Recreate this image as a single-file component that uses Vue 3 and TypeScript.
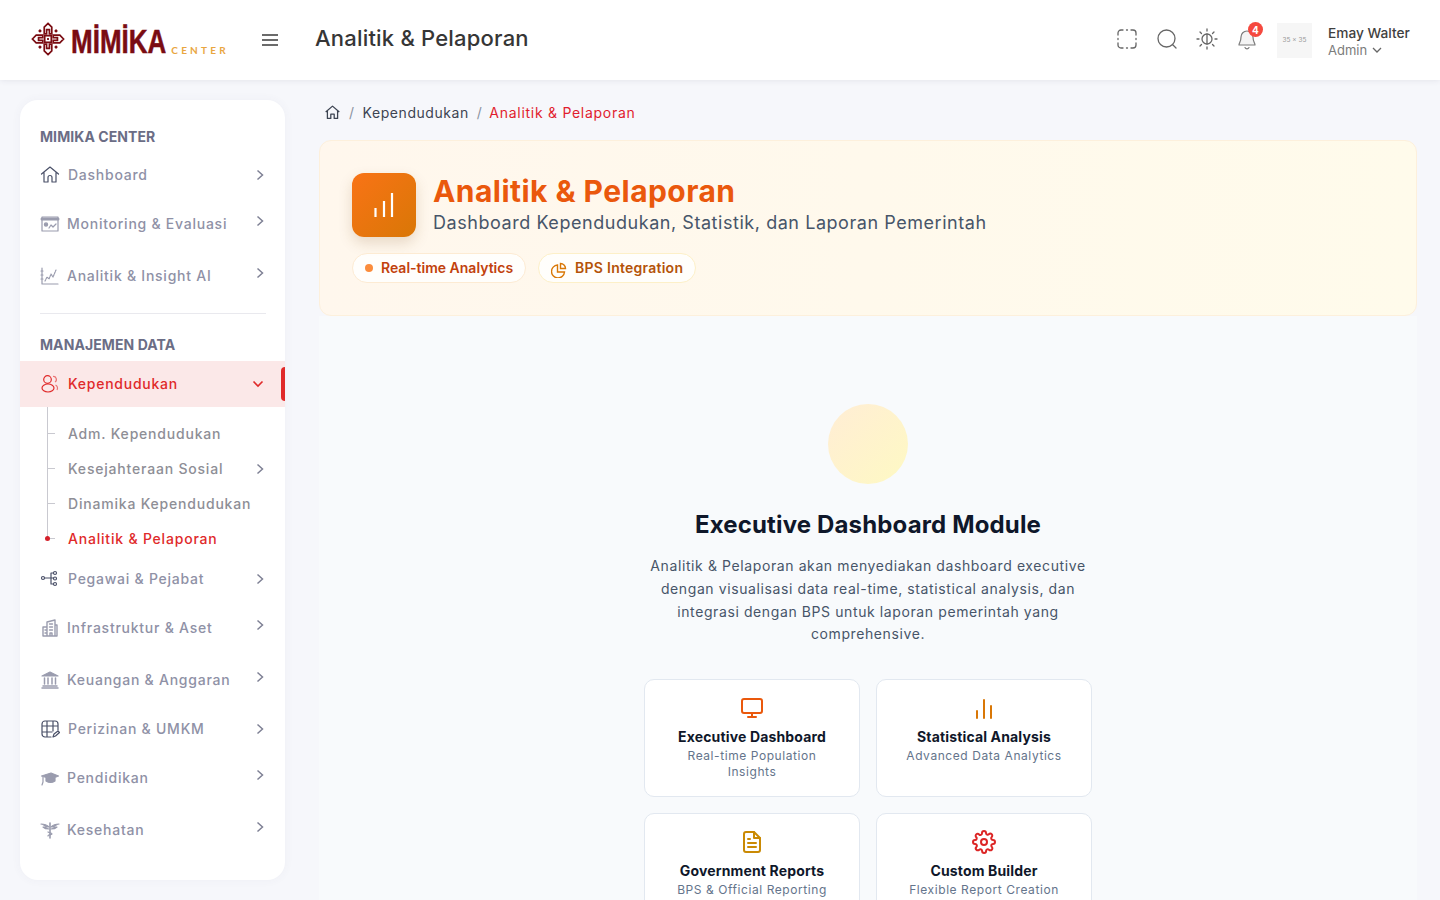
<template>
  <div class="page">
    <header class="topbar">
      <div class="logo">
        <svg class="logo-mark" width="34" height="34" viewBox="0 0 36 36" fill="none" stroke="#7a0c12" stroke-width="1.800">
          <path d="M18 1.500l4 4v7h-2.500V8h-3v4.500H14v-7z" />
          <path d="M18 34.500l4-4v-7h-2.500V28h-3v-4.500H14v7z" />
          <path d="M1.500 18l4-4h7v2.500H8v3h4.500V22h-7z" />
          <path d="M34.500 18l-4-4h-7v2.500H28v3h-4.500V22h7z" />
          <rect x="14.500" y="14.500" width="7" height="7" />
          <g fill="#7a0c12" stroke="none">
            <rect x="17" y="17" width="2" height="2" />
            <path d="M9.500 7.500l2 2-2 2-2-2zM26.500 7.500l2 2-2 2-2-2zM9.500 24.500l2 2-2 2-2-2zM26.500 24.500l2 2-2 2-2-2z" />
          </g>
        </svg>
        <span class="logo-word">MİMİKA</span>
        <span class="logo-center">CENTER</span>
      </div>
      <svg class="burger" width="16" height="14" viewBox="0 0 16 14" stroke="#6b6b6b" stroke-width="2">
        <path d="M0 2h16M0 7h16M0 12h16" />
      </svg>
      <div class="page-title">Analitik &amp; Pelaporan</div>
      <div class="top-actions">
        <span class="top-icon">
          <svg width="22" height="22" viewBox="0 0 22 22" fill="none" stroke="#666" stroke-width="1.300" stroke-linecap="round">
            <path d="M2 7V5a3 3 0 0 1 3-3h2M15 2h2a3 3 0 0 1 3 3v2M20 15v2a3 3 0 0 1-3 3h-2M7 20H5a3 3 0 0 1-3-3v-2" />
            <path d="M2 10.500v1M20 10.500v1M10.500 2h1M10.500 20h1" />
          </svg>
        </span>
        <span class="top-icon">
          <svg width="22" height="22" viewBox="0 0 22 22" fill="none" stroke="#666" stroke-width="1.300" stroke-linecap="round">
            <circle cx="10.500" cy="10.500" r="8.500" />
            <path d="M17 17l3 3" />
          </svg>
        </span>
        <span class="top-icon">
          <svg width="22" height="22" viewBox="0 0 22 22" fill="none" stroke="#666" stroke-width="1.300" stroke-linecap="round">
            <circle cx="11" cy="11" r="5" />
            <path d="M11 6v10" />
            <path d="M11 1v2M11 19v2M1 11h2M19 11h2M4 4l1.500 1.500M16.500 16.500L18 18M4 18l1.500-1.500M16.500 5.500L18 4" />
          </svg>
        </span>
        <span class="top-icon bell">
          <svg width="22" height="22" viewBox="0 0 22 22" fill="none" stroke="#7a7a7a" stroke-width="1.200" stroke-linecap="round" stroke-linejoin="round">
            <path d="M11 3a6 6 0 0 0-6 6c0 5-2 6-2 8h16c0-2-2-3-2-8a6 6 0 0 0-6-6z" fill="#f4f4f4" />
            <path d="M9 19.500a2.200 2.200 0 0 0 4 0" />
          </svg>
          <span class="badge">4</span>
        </span>
      </div>
      <div class="avatar">35 × 35</div>
      <div class="user">
        <div class="user-name">Emay Walter</div>
        <div class="user-role">
          Admin
          <svg width="10" height="6" viewBox="0 0 10 6" fill="none" stroke="#666" stroke-width="1.300"><path d="M1 1l4 4 4-4" /></svg>
        </div>
      </div>
    </header>

    <div class="body">
      <aside class="sidebar">
        <div class="section-title">MIMIKA CENTER</div>
        <div v-for="m in topMenu" :key="m.label" class="row" :class="{ tall: m.tall }">
          <svg class="row-icon" width="20" height="20" viewBox="0 0 20 20" fill="none" :stroke="m.color" stroke-width="1.200" stroke-linecap="round" stroke-linejoin="round" v-html="m.icon"></svg>
          <span class="row-label">{{ m.label }}</span>
          <svg class="chev" width="8" height="12" viewBox="0 0 8 12" fill="none" stroke="#7e8094" stroke-width="1.500"><path d="M1.500 1.500L6.500 6l-5 4.500" /></svg>
        </div>
        <div class="divider"></div>
        <div class="section-title second">MANAJEMEN DATA</div>
        <div class="row active">
          <svg class="row-icon" width="20" height="20" viewBox="0 0 20 20" fill="none" stroke="#e02a2a" stroke-width="1.200">
            <circle cx="7.500" cy="5.500" r="3.800" />
            <ellipse cx="8" cy="14" rx="6" ry="4" />
            <path d="M13 2.500a3 3 0 0 1 2 5.500M15.500 11a3.500 3.500 0 0 1 1.500 5" opacity=".6" />
          </svg>
          <span class="row-label">Kependudukan</span>
          <svg class="chev-down" width="12" height="8" viewBox="0 0 12 8" fill="none" stroke="#e02a2a" stroke-width="1.600"><path d="M1.500 1.500L6 6l4.500-4.500" /></svg>
          <span class="active-bar"></span>
        </div>
        <ul class="submenu">
          <li v-for="s in subMenu" :key="s.label" :class="{ current: s.current }">
            <span>{{ s.label }}</span>
            <svg v-if="s.more" class="chev" width="8" height="12" viewBox="0 0 8 12" fill="none" stroke="#7e8094" stroke-width="1.500"><path d="M1.500 1.500L6.500 6l-5 4.500" /></svg>
          </li>
        </ul>
        <div v-for="m in bottomMenu" :key="m.label" class="row" :class="{ tall: m.tall }">
          <svg class="row-icon" width="20" height="20" viewBox="0 0 20 20" fill="none" :stroke="m.color" stroke-width="1.200" stroke-linecap="round" stroke-linejoin="round" v-html="m.icon"></svg>
          <span class="row-label">{{ m.label }}</span>
          <svg class="chev" width="8" height="12" viewBox="0 0 8 12" fill="none" stroke="#7e8094" stroke-width="1.500"><path d="M1.500 1.500L6.500 6l-5 4.500" /></svg>
        </div>
      </aside>

      <main class="content">
        <nav class="crumbs">
          <svg width="17" height="17" viewBox="0 0 20 20" fill="none" stroke="#3d4452" stroke-width="1.500" stroke-linejoin="round">
            <path d="M2 9.500L10 2.500l8 7M4 8v9h4v-5h4v5h4V8" />
          </svg>
          <span class="sep">/</span>
          <span>Kependudukan</span>
          <span class="sep">/</span>
          <span class="crumb-current">Analitik &amp; Pelaporan</span>
        </nav>

        <section class="hero">
          <div class="hero-top">
            <div class="hero-icon">
              <svg width="24" height="24" viewBox="0 0 24 24" fill="none" stroke="#fff" stroke-width="2.200">
                <path d="M3.500 24v-9M12 24V8M20 24V0" />
              </svg>
            </div>
            <div>
              <h1>Analitik &amp; Pelaporan</h1>
              <p>Dashboard Kependudukan, Statistik, dan Laporan Pemerintah</p>
            </div>
          </div>
          <div class="hero-tags">
            <span class="tag tag-orange"><i class="dot"></i>Real-time Analytics</span>
            <span class="tag tag-amber">
              <svg class="pie" width="16" height="16" viewBox="0 0 16 16" fill="none" stroke="#d97706" stroke-width="1.400">
                <path d="M6.500 3A6.500 6.500 0 1 0 13.500 10H6.500z" />
                <path d="M9.500 1.500a5 5 0 0 1 5 5h-5z" />
              </svg>
              BPS Integration
            </span>
          </div>
        </section>

        <section class="module">
          <div class="circle"></div>
          <h2>Executive Dashboard Module</h2>
          <p class="lead">Analitik &amp; Pelaporan akan menyediakan dashboard executive dengan visualisasi data real-time, statistical analysis, dan integrasi dengan BPS untuk laporan pemerintah yang comprehensive.</p>
          <div class="cards">
            <div v-for="c in cards" :key="c.title" class="card">
              <svg width="24" height="24" viewBox="0 0 24 24" fill="none" :stroke="c.color" stroke-width="2" stroke-linecap="round" stroke-linejoin="round" v-html="c.icon"></svg>
              <div class="card-title">{{ c.title }}</div>
              <div class="card-sub">{{ c.sub }}</div>
            </div>
          </div>
        </section>
      </main>
    </div>
  </div>
</template>

<script setup lang="ts">
interface MenuItem { label: string; icon: string; tall?: boolean; color: string }

const grey = '#9a9cae'
const dark = '#4a5068'

const topMenu: MenuItem[] = [
  { label: 'Dashboard', color: dark, icon: '<path d="M1.500 9L10 2l8.500 7M4 7.500V17h4v-4.500a2 2 0 0 1 4 0V17h4V7.500"/>' },
  { label: 'Monitoring & Evaluasi', color: grey, tall: true, icon: '<rect x="2" y="3" width="16" height="14"/><path d="M2 5h16" stroke-width="3"/><circle cx="6" cy="10.500" r="1.600" fill="#9a9cae"/><path d="M9 14l2-3 2 2 3-3"/>' },
  { label: 'Analitik & Insight AI', color: grey, tall: true, icon: '<path d="M2 2v16h16M1 5h2M1 9h2M1 13h2"/><path d="M5 15l2-4 2 2 2-5 2 3 3-7" stroke-dasharray="1.500 1"/>' },
]

const subMenu = [
  { label: 'Adm. Kependudukan' },
  { label: 'Kesejahteraan Sosial', more: true },
  { label: 'Dinamika Kependudukan' },
  { label: 'Analitik & Pelaporan', current: true },
]

const bottomMenu: MenuItem[] = [
  { label: 'Pegawai & Pejabat', color: dark, icon: '<circle cx="3" cy="9" r="1.500"/><circle cx="15" cy="4" r="1.500"/><circle cx="15" cy="9.500" r="1.500"/><circle cx="15" cy="15" r="1.500"/><path d="M4.500 9h9M11 4h2.500M11 15h2.500M11 4v11"/>' },
  { label: 'Infrastruktur & Aset', color: grey, tall: true, icon: '<path d="M7 18V4l8-2v16M7 9H3v9h14V7h-2M9.500 6h3M9.500 9h3M9.500 12h3M5 12h1M5 15h1M10 18v-3h2v3" stroke-width="1.400"/>' },
  { label: 'Keuangan & Anggaran', color: grey, tall: true, icon: '<path d="M10 2l8 4H2z" fill="#9a9cae"/><path d="M2 18h16M3 16h14M4.500 8v6M8 8v6M12 8v6M15.500 8v6" stroke-width="1.500"/>' },
  { label: 'Perizinan & UMKM', color: dark, icon: '<path d="M11 18H5a3 3 0 0 1-3-3V5a3 3 0 0 1 3-3h10a3 3 0 0 1 3 3v6M2 7h16M2 13h10M7 2v16M13 2v10"/><path d="M13 18l1-3 4-3 1.500 1.500-4 3.500z"/>' },
  { label: 'Pendidikan', color: grey, tall: true, icon: '<path d="M1.500 8L11 5l7.500 3-7.500 3z" fill="#9a9cae"/><path d="M6 10v3c3 2 6 2 9 0v-3" fill="#9a9cae"/><path d="M3 9v5l-1 3"/>' },
  { label: 'Kesehatan', color: grey, tall: true, icon: '<path d="M10 3v15" stroke-width="1.600"/><path d="M1 4c3 0 6 1 8 3H3c1 1 3 2 6 2M19 4c-3 0-6 1-8 3h6c-1 1-3 2-6 2" fill="#9a9cae"/><path d="M8 12c2 1 4 1 4 2s-4 0-4 2"/>' },
]

const cards = [
  { title: 'Executive Dashboard', sub: 'Real-time Population Insights', color: '#ea580c', icon: '<rect x="2" y="3" width="20" height="14" rx="2"/><path d="M8 21h8M12 17v4"/>' },
  { title: 'Statistical Analysis', sub: 'Advanced Data Analytics', color: '#d97706', icon: '<path d="M5 22v-7M12 22V4M19 22V10"/>' },
  { title: 'Government Reports', sub: 'BPS & Official Reporting', color: '#ca8a04', icon: '<path d="M14 2H6a2 2 0 0 0-2 2v16a2 2 0 0 0 2 2h12a2 2 0 0 0 2-2V8z"/><path d="M14 2v6h6M16 13H8M16 17H8M10 9H8"/>' },
  { title: 'Custom Builder', sub: 'Flexible Report Creation', color: '#dc2626', icon: '<circle cx="12" cy="12" r="3"/><path d="M19.400 15a1.650 1.650 0 0 0 .33 1.820l.06.06a2 2 0 1 1-2.830 2.830l-.06-.06a1.650 1.650 0 0 0-2.800 1.170V21a2 2 0 1 1-4 0v-.09A1.650 1.650 0 0 0 7.300 19.700l-.06.06a2 2 0 1 1-2.830-2.830l.06-.06a1.650 1.650 0 0 0-1.170-2.800H3a2 2 0 1 1 0-4h.09A1.650 1.650 0 0 0 4.300 7.300l-.06-.06a2 2 0 1 1 2.830-2.830l.06.06A1.650 1.650 0 0 0 10 3.300V3a2 2 0 1 1 4 0v.09a1.650 1.650 0 0 0 2.800 1.170l.06-.06a2 2 0 1 1 2.830 2.830l-.06.06a1.650 1.650 0 0 0 1.170 2.800H21a2 2 0 1 1 0 4h-.09a1.650 1.650 0 0 0-1.510 1z"/>' },
]
</script>

<style>
html, body { margin: 0; height: 900px; overflow: hidden; background: #f6f7fb; }
</style>

<style scoped>
.page { height: 900px; overflow: hidden; font-family: "Inter", "Roboto", sans-serif; background: #f6f7fb; }
.topbar { height: 80px; background: #fff; display: flex; align-items: center; box-shadow: 0 0 6px rgba(60,60,90,0.12); position: relative; padding-left: 31px; box-sizing: border-box; }
.logo { display: flex; align-items: center; width: 231px; height: 40px; }
.logo-mark { flex: none; margin-top: -2px; }
.logo-word { font-family: "Liberation Sans", sans-serif; font-size: 26px; font-weight: 700; color: #7a0c12; margin-left: 6px; line-height: 26px; transform: scaleY(1.3); transform-origin: center; -webkit-text-stroke: 0.4px #7a0c12; margin-top: 2px; }
.logo-center { font-family: "Lato", sans-serif; font-size: 10px; font-weight: 700; letter-spacing: 3.200px; color: #e9a63f; margin-left: 5px; margin-top: 20px; }
.burger { flex: none; }
.page-title { margin-left: 37px; font-size: 22px; font-weight: 500; color: #363636; margin-top: -4px; letter-spacing: 0.200px; }
.top-actions { margin-left: auto; display: flex; gap: 18px; }
.top-icon { width: 22px; height: 22px; display: block; position: relative; margin-top: -2px; }
.badge { position: absolute; top: -6px; left: 12px; width: 15px; height: 15px; border-radius: 50%; background: #f5493f; color: #fff; font-size: 10px; font-weight: 700; display: flex; align-items: center; justify-content: center; }
.avatar { width: 35px; height: 35px; background: #f6f6f6; color: #999; font-size: 6.500px; display: flex; align-items: center; justify-content: center; margin-left: 19px; }
.user { margin-left: 16px; width: 112px; margin-top: 2px; }
.user-name { font-size: 13.700px; font-weight: 500; color: #3f3f3f; line-height: 18px; }
.user-role { font-size: 13px; color: #7c7c7c; line-height: 16px; display: flex; align-items: center; gap: 5px; }

.body { display: flex; padding: 20px 23px 0 20px; gap: 34px; height: 820px; box-sizing: border-box; }
.sidebar { width: 265px; height: 780px; flex: none; background: #fff; border-radius: 18px; padding-top: 27px; box-sizing: border-box; box-shadow: 0 0 10px rgba(80,80,120,0.05); }
.section-title { padding-left: 20px; font-size: 14px; font-weight: 700; color: #6b6d85; line-height: 20px; height: 25px; letter-spacing: 0.080px; }
.section-title.second { height: 26px; margin-top: 21px; }
.row { height: 46px; display: flex; align-items: center; padding: 0 21px 0 20px; position: relative; }
.row.tall { height: 52px; }
.row-icon { flex: none; margin-right: 8px; }
.row.tall .row-icon { margin-right: 7px; }
.row-label { flex: 1; font-size: 14px; font-weight: 500; color: #8f91a6; letter-spacing: 0.750px; margin-bottom: 2px; }
.chev { flex: none; }
.row.tall .chev { margin-bottom: 6px; }
.row.active { background: #fbe8e8; }
.row.active .row-label { color: #e02a2a; }
.active-bar { position: absolute; right: 0; top: 6px; width: 4px; height: 34px; background: #e02a2a; border-radius: 4px 0 0 4px; }
.divider { height: 1px; background: #e9e9ee; margin: 11px 19px 0 20px; }
.submenu { list-style: none; margin: 0 0 0 27px; padding: 9px 21px 0 21px; position: relative; }
.submenu::before { content: ""; position: absolute; left: 0; top: 0; bottom: 17px; width: 1px; background: #c9c9d0; }
.submenu li { height: 35px; display: flex; align-items: center; justify-content: space-between; font-size: 14px; font-weight: 500; color: #8e8e96; letter-spacing: 0.800px; position: relative; }
.submenu li::before { content: ""; position: absolute; left: -21px; top: 17px; width: 8px; height: 1px; background: #c9c9d0; }
.submenu li.current { color: #e02a2a; }
.submenu li.current::after { content: ""; position: absolute; left: -23px; top: 15px; width: 5px; height: 5px; border-radius: 50%; background: #d4202a; }

.content { flex: 1; min-width: 0; }
.crumbs { height: 20px; margin-top: 2px; display: flex; align-items: center; gap: 8px; font-size: 14px; color: #3d4452; letter-spacing: 0.550px; margin-left: 5px; margin-bottom: 18px; }
.sep { color: #8b93a1; }
.crumb-current { color: #e11d2e; letter-spacing: 0.720px; margin-left: -1px; }
.hero { height: 176px; box-sizing: border-box; padding: 32px 32px 0; background: linear-gradient(90deg, #fff7ed, #fffbeb); border: 1px solid #fdf0dc; border-radius: 12px; }
.hero-top { display: flex; gap: 17px; align-items: flex-start; }
.hero-icon { width: 64px; height: 64px; flex: none; border-radius: 12px; background: linear-gradient(135deg, #f97316, #d97706); display: flex; align-items: center; justify-content: center; box-shadow: 0 6px 14px rgba(120,80,20,0.18); }
h1 { margin: 0; font-size: 30px; line-height: 36px; font-weight: 700; color: #ea580c; letter-spacing: 0.450px; }
.hero-top p { margin: 0; font-size: 18px; line-height: 28px; color: #475569; letter-spacing: 0.550px; }
.hero-tags { display: flex; gap: 12px; margin-top: 16px; }
.tag { height: 30px; box-sizing: border-box; padding: 0 12px 2px; display: flex; align-items: center; gap: 8px; border-radius: 15px; background: rgba(255,255,255,0.8); font-size: 14px; font-weight: 600; }
.tag-orange { border: 1px solid #fdebd3; color: #c2410c; }
.tag-amber { border: 1px solid #fdf0c8; color: #b45309; letter-spacing: 0.250px; }
.dot { width: 8px; height: 8px; border-radius: 50%; background: #fb8c3c; margin-top: 2px; }
.pie { margin-top: 6px; }

.module { background: #f8fafc; height: 600px; display: flex; flex-direction: column; align-items: center; padding-top: 88px; box-sizing: border-box; }
.circle { width: 80px; height: 80px; flex: none; border-radius: 50%; background: linear-gradient(135deg, #ffedd5, #fef9c3); }
h2 { margin: 25px 0 0; font-size: 24px; line-height: 32px; font-weight: 700; color: #0f172a; letter-spacing: 0.150px; }
.lead { margin: 14px 0 0; width: 448px; text-align: center; font-size: 14px; line-height: 22.800px; color: #475569; letter-spacing: 0.600px; }
.cards { margin-top: 33px; width: 448px; flex: none; display: grid; grid-template-columns: 216px 216px; gap: 16px; }
.card { background: #fff; border: 1px solid #e2e8f0; border-radius: 10px; padding: 16px 20px; box-sizing: border-box; min-height: 118px; display: flex; flex-direction: column; align-items: center; text-align: center; }
.card-title { margin: 7px 0 1px; font-size: 14px; font-weight: 700; color: #0f172a; line-height: 20px; letter-spacing: 0.150px; }
.card-sub { font-size: 12px; line-height: 16px; color: #64748b; letter-spacing: 0.570px; }
</style>
